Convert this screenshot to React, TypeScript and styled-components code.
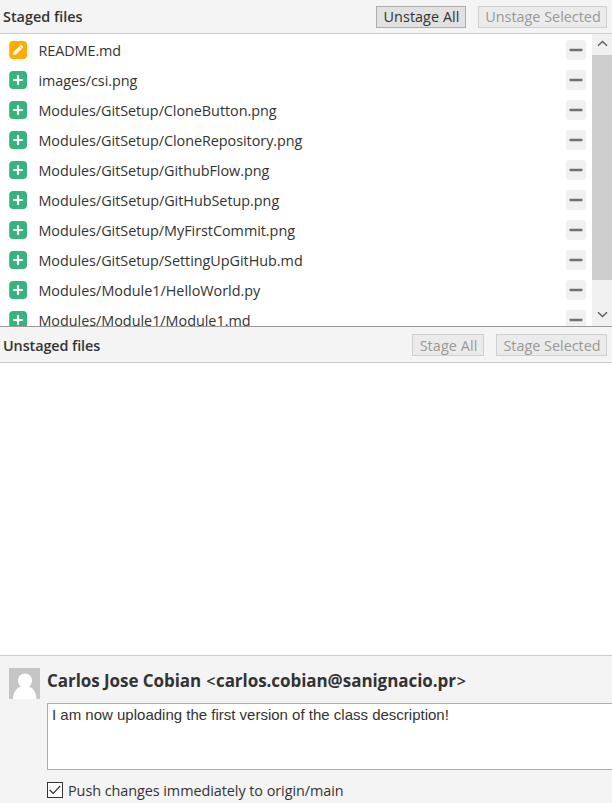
import React from "react";
import styled, { createGlobalStyle } from "styled-components";

const GlobalStyle = createGlobalStyle`
  * { box-sizing: border-box; }
  body {
    margin: 0;
    overflow: hidden;
    background: #fff;
    color: #333;
    font-family: "Open Sans", "Noto Sans", sans-serif;
    font-size: 14.4px;
  }
`;

const Window = styled.main`
  width: 612px;
  height: 803px;
  display: flex;
  flex-direction: column;
  overflow: hidden;
`;

const PaneHeader = styled.header<{ $height: number }>`
  flex: none;
  height: ${(p) => p.$height}px;
  display: flex;
  align-items: center;
  gap: 12px;
  padding: 0 5px 0 3px;
  background: #f4f4f4;
  border-bottom: 1px solid #ccc;
`;

const PaneTitle = styled.h2<{ $track: number; $drop?: number }>`
  margin: 0 auto 0 0;
  padding-top: ${(p) => p.$drop ?? 0}px;
  font-size: 14.4px;
  font-weight: 600;
  line-height: 20px;
  letter-spacing: ${(p) => p.$track}px;
`;

const ActionButton = styled.button<{ $width: number; $track: number; $drop?: number }>`
  width: ${(p) => p.$width}px;
  height: 22px;
  padding: ${(p) => p.$drop ?? 0}px 0 0 1px;
  border: 1px solid #adadad;
  background: #e1e1e1;
  color: #333;
  font: inherit;
  line-height: 20px;
  white-space: nowrap;
  letter-spacing: ${(p) => p.$track}px;

  &:disabled {
    border-color: #d0d0d0;
    background: #ebebeb;
    color: #999;
  }
`;

const StagedPane = styled.div`
  flex: none;
  display: flex;
  height: 293px;
  overflow: hidden;
  border-bottom: 1px solid #999;
`;

const FileList = styled.ul`
  flex: 1;
  margin: 0;
  padding: 1px 6px 0 9px;
  list-style: none;
`;

const FileRow = styled.li`
  height: 30px;
  display: flex;
  align-items: center;
`;

const FileName = styled.span<{ $track: number }>`
  flex: 1;
  margin-left: 11.4px;
  padding-top: 2px;
  line-height: 20px;
  white-space: nowrap;
  letter-spacing: ${(p) => p.$track}px;
`;

const StatusIcon = styled.svg`
  display: block;
  width: 18px;
  height: 18px;
`;

const UnstageIcon = styled.svg`
  display: block;
  width: 20px;
  height: 20px;
`;

const ScrollBar = styled.div`
  width: 20px;
  display: flex;
  flex-direction: column;
  background: #f0f0f0;
`;

const ScrollArrow = styled.svg`
  display: block;
  flex: none;
  width: 20px;
  height: 21px;
`;

const ScrollThumb = styled.div`
  height: 225px;
  margin-bottom: auto;
  background: #cdcdcd;
`;

const UnstagedPane = styled.div`
  flex: none;
  height: 292px;
`;

const CommitPanel = styled.section`
  flex: 1;
  display: grid;
  grid-template-columns: 31px 1fr;
  column-gap: 7px;
  align-items: start;
  padding: 12px 0 0 9px;
  background: #f4f4f4;
  border-top: 1px solid #ccc;
`;

const Avatar = styled.svg`
  display: block;
  width: 31px;
  height: 31px;
`;

const CommitForm = styled.div`
  display: flex;
  flex-direction: column;
`;

const Author = styled.div`
  height: 35px;
  line-height: 26px;
  font-size: 17px;
  font-weight: 700;
  letter-spacing: -0.06px;
  white-space: nowrap;
`;

const Bracket = styled.span`
  display: inline-block;
  width: 10.5px;
  font-size: 16px;
  font-weight: 600;
  text-align: center;
`;

const Message = styled.div`
  height: 67px;
  padding: 2px 4px;
  border: 1px solid #abadb3;
  border-right: 0;
  background: #fff;
  font-family: "Liberation Sans", Arial, sans-serif;
  font-size: 15px;
  line-height: 18px;
  white-space: nowrap;
`;

const PushOption = styled.div`
  display: flex;
  align-items: center;
  gap: 5px;
  height: 20px;
  margin-top: 10px;
  letter-spacing: -0.05px;
  white-space: nowrap;
`;

const CheckBox = styled.svg`
  display: block;
  flex: none;
  width: 16px;
  height: 16px;
`;

type FileEntry = { name: string; status: "added" | "modified"; track: number };

const stagedFiles: FileEntry[] = [
  { name: "README.md", status: "modified", track: -0.06 },
  { name: "images/csi.png", status: "added", track: -0.05 },
  { name: "Modules/GitSetup/CloneButton.png", status: "added", track: -0.05 },
  { name: "Modules/GitSetup/CloneRepository.png", status: "added", track: -0.045 },
  { name: "Modules/GitSetup/GithubFlow.png", status: "added", track: -0.04 },
  { name: "Modules/GitSetup/GitHubSetup.png", status: "added", track: -0.03 },
  { name: "Modules/GitSetup/MyFirstCommit.png", status: "added", track: -0.035 },
  { name: "Modules/GitSetup/SettingUpGitHub.md", status: "added", track: -0.035 },
  { name: "Modules/Module1/HelloWorld.py", status: "added", track: -0.01 },
  { name: "Modules/Module1/Module1.md", status: "added", track: -0.02 },
];

function FileStatus({ status }: { status: FileEntry["status"] }) {
  if (status === "modified") {
    return (
      <StatusIcon viewBox="0 0 18 18">
        <rect x="0.2" width="17.8" height="18" rx="4" fill="#ffab00" />
        <path d="M4 14l.8-3.300 5.500-5.500 2.500 2.500-5.500 5.500z" fill="#fff" />
        <path d="M10.700 4.800l.6-.6c.5-.5 1-.5 1.500 0l1 1c.5.5.5 1 0 1.500l-.6.6z" fill="#fff" />
      </StatusIcon>
    );
  }
  return (
    <StatusIcon viewBox="0 0 18 18">
      <rect x="0.2" width="17.8" height="18" rx="4" fill="#36b37e" />
      <path d="M9 5v8M5 9h8" stroke="#fff" strokeWidth="2.2" strokeLinecap="round" />
    </StatusIcon>
  );
}

export default function App() {
  return (
    <>
      <GlobalStyle />
      <Window>
        <PaneHeader $height={34}>
          <PaneTitle $track={0}>Staged files</PaneTitle>
          <ActionButton $width={90} $track={0.05}>Unstage All</ActionButton>
          <ActionButton $width={129} $track={0} disabled>Unstage Selected</ActionButton>
        </PaneHeader>
        <StagedPane>
          <FileList>
            {stagedFiles.map((file) => (
              <FileRow key={file.name}>
                <FileStatus status={file.status} />
                <FileName $track={file.track}>{file.name}</FileName>
                <UnstageIcon viewBox="0 0 20 20">
                  <rect width="20" height="20" rx="3" fill="#f0f0f0" />
                  <rect x="3.6" y="8.7" width="12.8" height="2.6" rx="0.6" fill="#707070" />
                </UnstageIcon>
              </FileRow>
            ))}
          </FileList>
          <ScrollBar>
            <ScrollArrow viewBox="0 0 20 21">
              <path d="M6 11.7l4.5-4.2 4.5 4.2" fill="none" stroke="#606060" strokeWidth="1.5" />
            </ScrollArrow>
            <ScrollThumb />
            <ScrollArrow viewBox="0 0 20 21">
              <path d="M6 7.3l4.5 4.2L15 7.3" fill="none" stroke="#606060" strokeWidth="1.5" />
            </ScrollArrow>
          </ScrollBar>
        </StagedPane>
        <PaneHeader $height={36}>
          <PaneTitle $track={-0.09} $drop={2}>Unstaged files</PaneTitle>
          <ActionButton $width={72} $track={0.08} $drop={1} disabled>Stage All</ActionButton>
          <ActionButton $width={111} $track={0} $drop={1} disabled>Stage Selected</ActionButton>
        </PaneHeader>
        <UnstagedPane />
        <CommitPanel>
          <Avatar viewBox="0 0 31 31">
            <rect width="31" height="31" fill="#c5c5c5" />
            <path
              d="M16 5.500c4 0 7 3 7 7 0 2.700-1.200 4.700-3 6 4.400 1.500 7.200 6 7.500 12.500H4c.3-6.500 3.200-11 8-12.500-1.900-1.300-3-3.300-3-6 0-4 3-7 7-7z"
              fill="#fff"
            />
          </Avatar>
          <CommitForm>
            <Author>
              Carlos Jose Cobian <Bracket>&lt;</Bracket>carlos.cobian@sanignacio.pr<Bracket>&gt;</Bracket>
            </Author>
            <Message>I am now uploading the first version of the class description!</Message>
            <PushOption>
              <CheckBox viewBox="0 0 16 16">
                <rect x="0.5" y="0.5" width="15" height="15" fill="#fff" stroke="#333" />
                <path d="M2.6 8l3.6 3.5 7-7.5" fill="none" stroke="#333" strokeWidth="1.2" />
              </CheckBox>
              <span>Push changes immediately to origin/main</span>
            </PushOption>
          </CommitForm>
        </CommitPanel>
      </Window>
    </>
  );
}
